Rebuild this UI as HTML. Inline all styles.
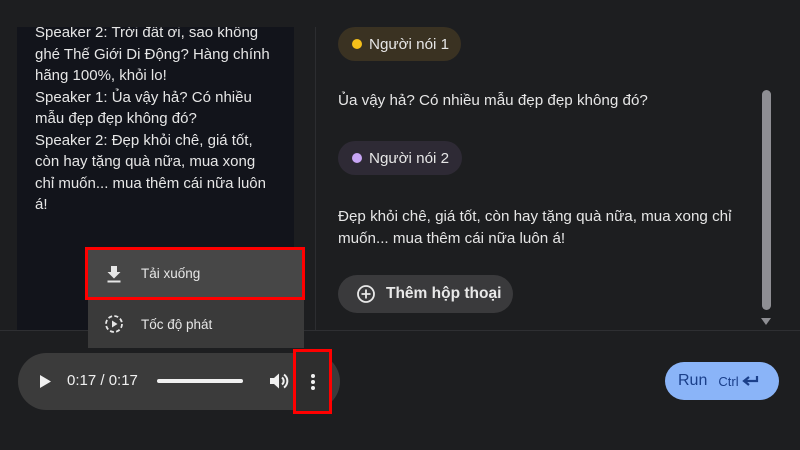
<!DOCTYPE html>
<html><head><meta charset="utf-8"><style>
*{margin:0;padding:0;box-sizing:border-box}
body{width:800px;height:450px;background:#1d1e20;font-family:"Liberation Sans",Arial,sans-serif;color:#e3e3e3;position:relative;overflow:hidden}
.abs{position:absolute}
.lp{left:17px;top:27px;width:277px;height:303px;background:#12141b;overflow:hidden}
.lt{left:18px;top:-5px;width:270px;font-size:15px;line-height:21.5px;color:#e6e6e6;white-space:nowrap}
.vline{left:315px;top:27px;width:1px;height:303px;background:#2c2d30}
.hline{left:0;top:330px;width:800px;height:1px;background:#2e2f32}
.chip{height:34px;border-radius:17px;font-size:15.2px;display:flex;align-items:center;padding-left:14px;color:#e6e6e6}
.dot{width:10px;height:10px;border-radius:50%;margin-right:7px}
.rt{left:338px;font-size:15.2px;line-height:21.5px;color:#e6e6e6}
</style></head><body>
<div class="abs lp"><div class="abs lt">Speaker 2: Trời đất ơi, sao không<br>ghé Thế Giới Di Động? Hàng chính<br>hãng 100%, khỏi lo!<br>Speaker 1: Ủa vậy hả? Có nhiều<br>mẫu đẹp đẹp không đó?<br>Speaker 2: Đẹp khỏi chê, giá tốt,<br>còn hay tặng quà nữa, mua xong<br>chỉ muốn... mua thêm cái nữa luôn<br>á!</div></div>
<div class="abs vline"></div>
<div class="abs hline"></div>
<div class="abs chip" style="left:338px;top:27px;width:123px;background:#3a3222"><span class="dot" style="background:#f6c01a"></span>Người nói 1</div>
<div class="abs rt" style="top:90px">Ủa vậy hả? Có nhiều mẫu đẹp đẹp không đó?</div>
<div class="abs chip" style="left:338px;top:141px;width:124px;background:#2e2a35"><span class="dot" style="background:#c8a6f5"></span>Người nói 2</div>
<div class="abs rt" style="top:206px;width:410px">Đẹp khỏi chê, giá tốt, còn hay tặng quà nữa, mua xong chỉ muốn... mua thêm cái nữa luôn á!</div>
<div class="abs" style="left:338px;top:275px;width:175px;height:38px;border-radius:19px;background:#3a3a3c;display:flex;align-items:center;font-size:15.5px;font-weight:bold;color:#e8e8e8">
<svg width="20" height="20" viewBox="0 0 20 20" style="margin:0 10px 0 18px"><circle cx="10" cy="10" r="8" fill="none" stroke="#e8e8e8" stroke-width="1.8"/><path d="M10 5.5v9M5.5 10h9" stroke="#e8e8e8" stroke-width="1.8"/></svg>Thêm hộp thoại</div>
<div class="abs" style="left:762px;top:90px;width:9px;height:220px;border-radius:5px;background:#8e8e93"></div>
<div class="abs" style="left:761px;top:318px;width:0;height:0;border-left:5px solid transparent;border-right:5px solid transparent;border-top:7px solid #8e8e93"></div>
<div class="abs" style="left:665px;top:362px;width:114px;height:38px;border-radius:19px;background:#8ab4f8;color:#1a3f8a;display:flex;align-items:center;padding-left:13px;font-size:16px">Run<span style="font-size:13px;margin-left:11px">Ctrl</span>
<svg width="18" height="14" viewBox="0 0 18 14" style="margin-left:2px"><path d="M16 2v5H4M8 3L3 7l5 4" fill="none" stroke="#1a3f8a" stroke-width="2.2"/></svg></div>
<div class="abs" style="left:88px;top:300px;width:216px;height:48px;background:#3a3a3a;display:flex;align-items:center;font-size:13.5px;color:#e6e6e6">
<svg width="20" height="20" viewBox="0 0 20 20" style="margin:0 17px 0 16px"><circle cx="10" cy="10" r="8" fill="none" stroke="#e6e6e6" stroke-width="1.8" stroke-dasharray="4 2.3"/><path d="M8 6.5v7l5.5-3.5z" fill="#e6e6e6"/></svg>Tốc độ phát</div>
<div class="abs" style="left:85px;top:247px;width:220px;height:53px;border:3px solid #f00;background:#474747;display:flex;align-items:center;font-size:13.5px;color:#e6e6e6">
<svg width="16" height="18" viewBox="0 0 16 18" style="margin:0 19px 0 18px"><path d="M5 1h6v6h3.5L8 13.5 1.5 7H5z" fill="#e6e6e6"/><rect x="1.5" y="15.5" width="13" height="2" fill="#e6e6e6"/></svg>Tải xuống</div>
<div class="abs" style="left:18px;top:353px;width:322px;height:57px;border-radius:29px;background:#3b3b3b"></div>
<svg class="abs" style="left:39px;top:374px" width="13" height="15" viewBox="0 0 13 15"><path d="M1 1v13l11-6.5z" fill="#f0f0f0"/></svg>
<div class="abs" style="left:67px;top:372px;font-size:15px;color:#f0f0f0">0:17 / 0:17</div>
<div class="abs" style="left:157px;top:379px;width:86px;height:4px;border-radius:2px;background:#f0f0f0"></div>
<svg class="abs" style="left:269px;top:372px" width="20" height="18" viewBox="0 0 20 18"><path d="M1 6h4l5-4.5v15L5 12H1z" fill="#f0f0f0"/><path d="M13 5.5a4.5 4.5 0 0 1 0 7M15 2.5a8 8 0 0 1 0 13" fill="none" stroke="#f0f0f0" stroke-width="2"/></svg>
<div class="abs" style="left:293px;top:349px;width:39px;height:65px;border:3px solid #f00;background:#2e2e2e"></div>
<div class="abs" style="left:311px;top:374px;width:4px;height:4px;border-radius:2px;background:#f0f0f0"></div>
<div class="abs" style="left:311px;top:380px;width:4px;height:4px;border-radius:2px;background:#f0f0f0"></div>
<div class="abs" style="left:311px;top:386px;width:4px;height:4px;border-radius:2px;background:#f0f0f0"></div>
</body></html>
